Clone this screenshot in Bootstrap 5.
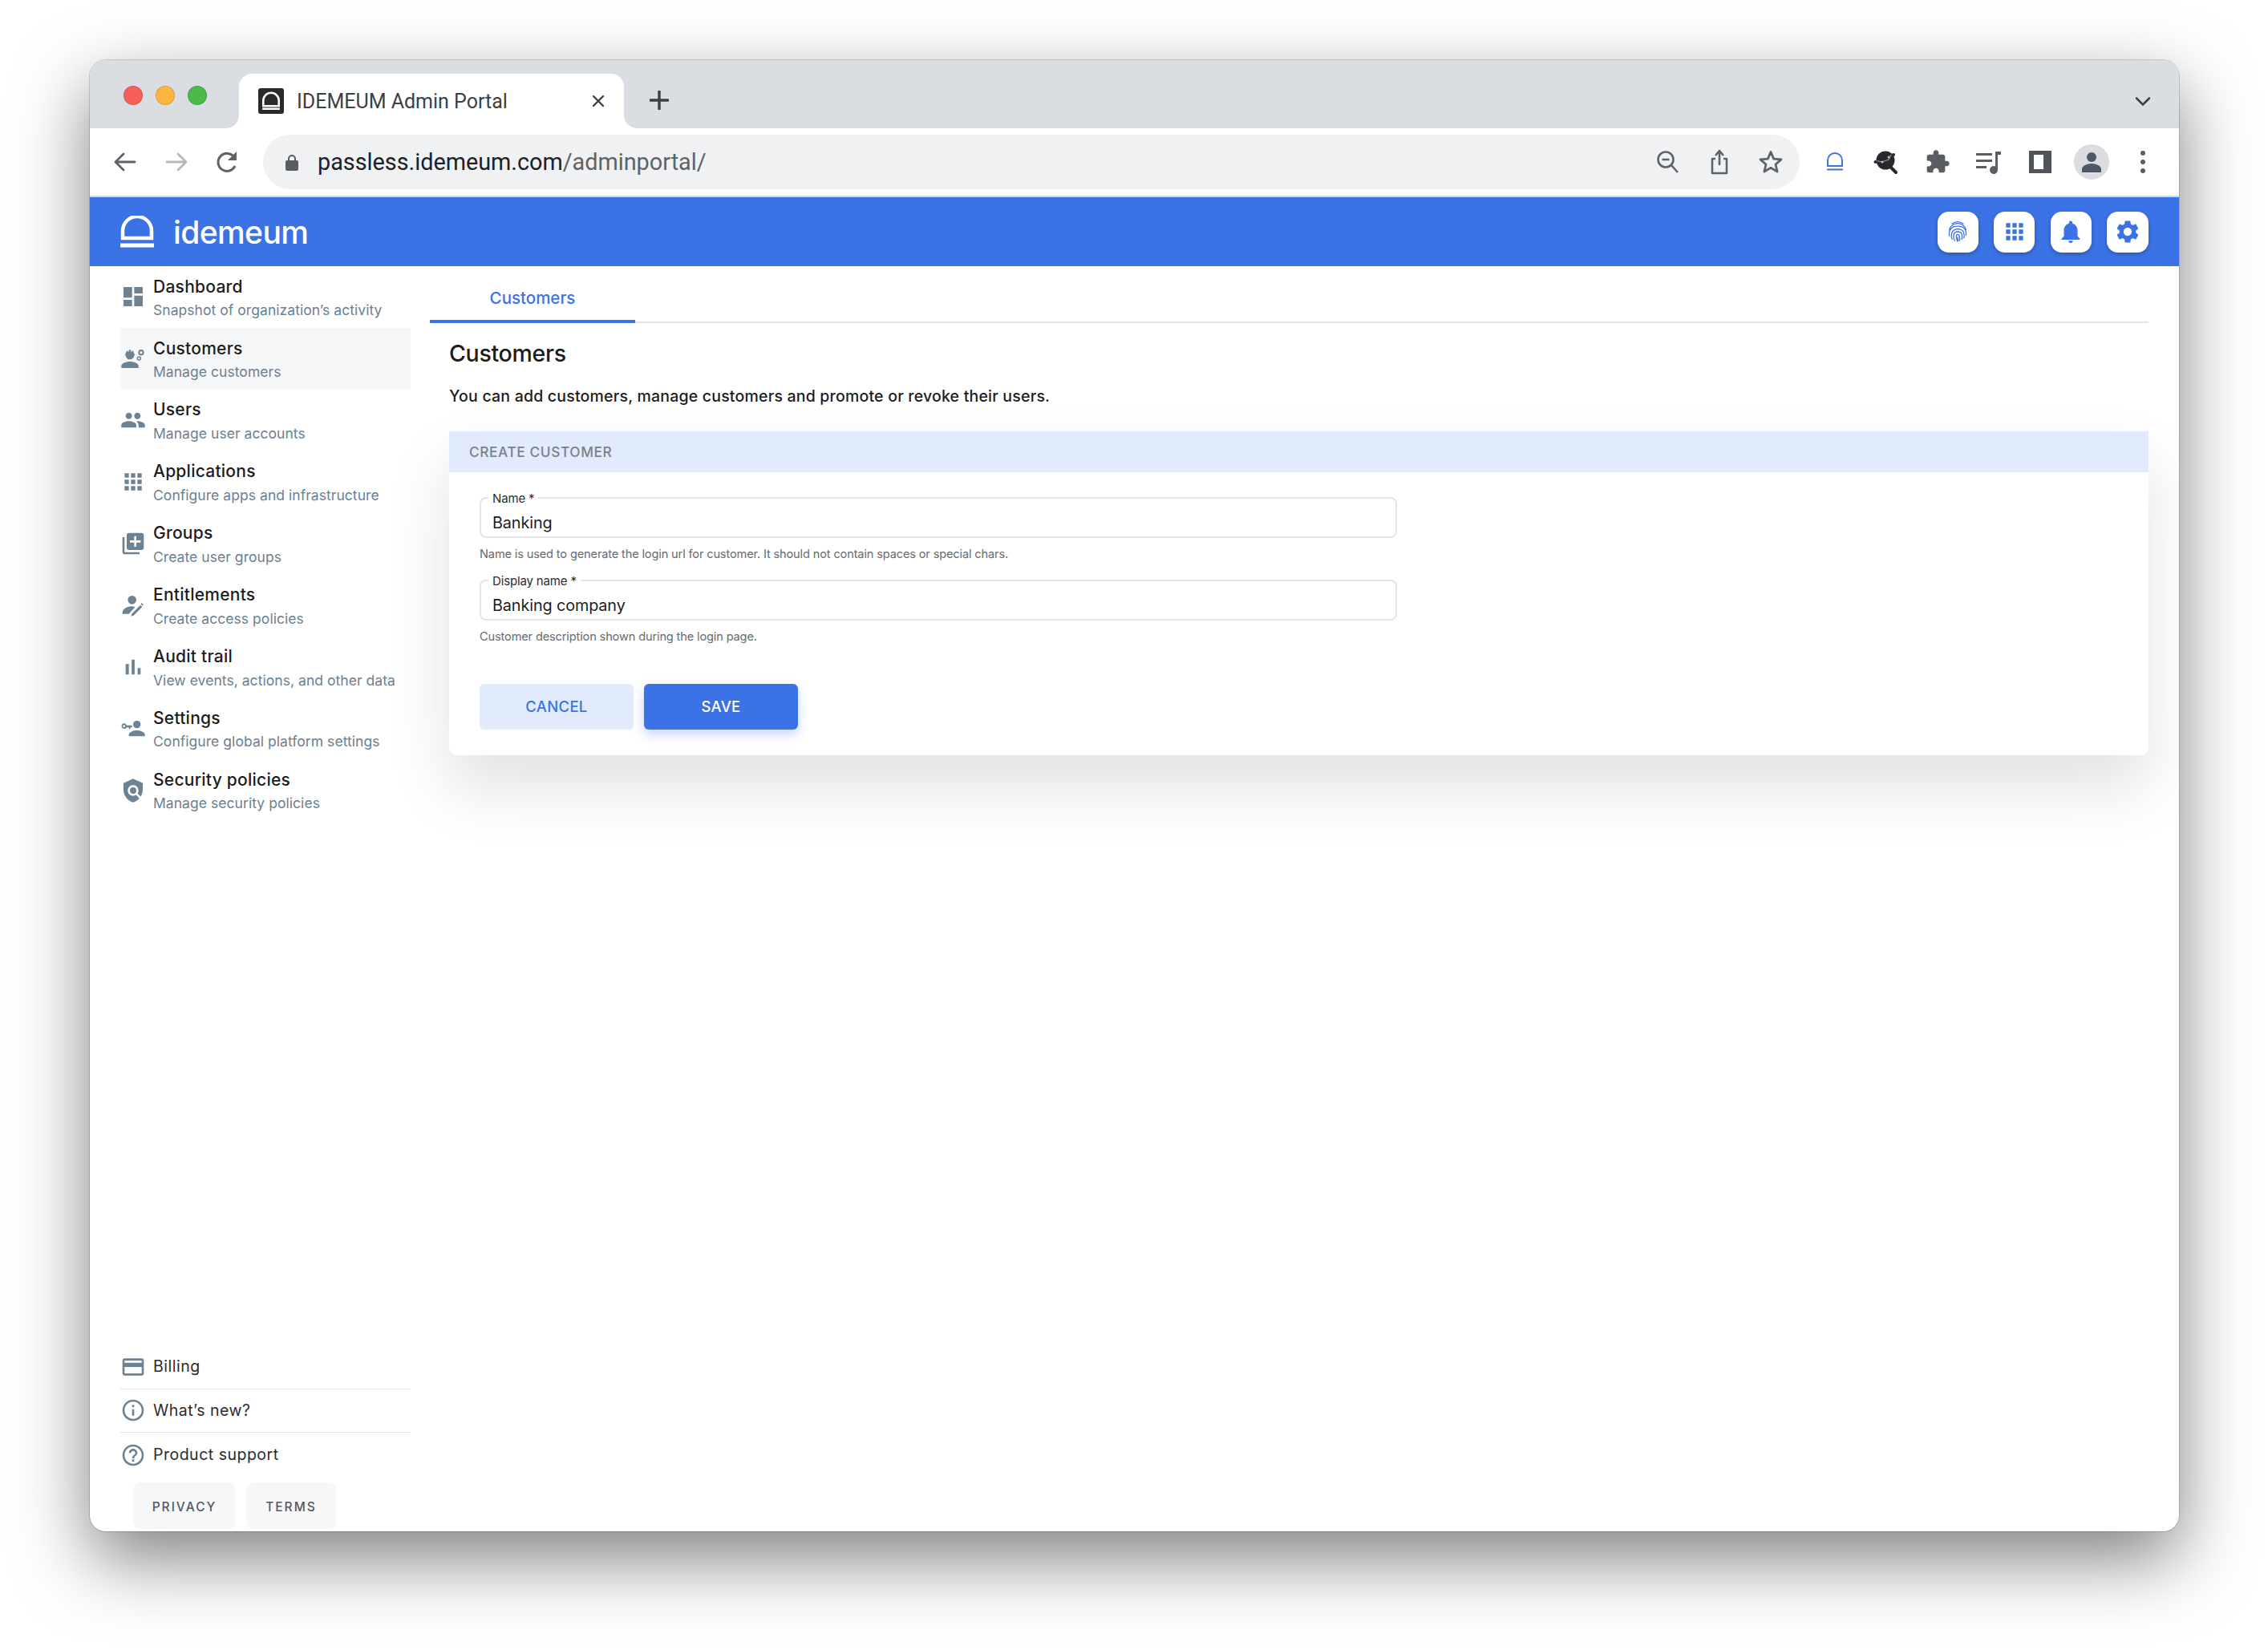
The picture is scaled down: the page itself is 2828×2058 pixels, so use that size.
<!DOCTYPE html>
<html lang="en">
<head>
<meta charset="utf-8">
<title>IDEMEUM Admin Portal</title>
<link href="https://cdn.jsdelivr.net/npm/bootstrap@5.3.0/dist/css/bootstrap.min.css" rel="stylesheet">
<style>
html,body{height:100%;background:#fff}
body{padding:75px 111px 148px 112px;font-family:"Inter","Liberation Sans",sans-serif;color:#1c1c1e;overflow:hidden}
.macwin{height:1835px;border-radius:20px;background:#fff;box-shadow:0 0 0 1px rgba(0,0,0,.16),0 34px 90px rgba(0,0,0,.5);overflow:hidden;display:flex;flex-direction:column}
.tabstrip{height:85px;background:#dadde2;flex:none;padding-left:42px;align-items:flex-start}
.tl{width:24px;height:24px;border-radius:50%;border:1px solid rgba(0,0,0,.12)}
.tl-r{background:#f5605a}.tl-y{background:#fbb540}.tl-g{background:#4bba4a}
.lights{gap:16px;padding-top:32px;width:144px}
.ctab{position:relative;width:480px;height:68px;margin-top:17px;background:#fff;border-radius:16px 16px 0 0;padding:0 24px;font:400 25px "Roboto",sans-serif;color:#3c4043}
.ctab::before,.ctab::after{content:"";position:absolute;bottom:0;width:16px;height:16px}
.ctab::before{left:-16px;background:radial-gradient(circle at 0 0,#dadde2 15.5px,#fff 16px)}
.ctab::after{right:-16px;background:radial-gradient(circle at 100% 0,#dadde2 15.5px,#fff 16px)}
.favi{width:32px;height:32px;background:#2a2a2c;border-radius:3px;margin-right:16px}
.ctab-x{margin-left:auto;margin-right:0}
.newtab{margin:38px 0 0 32px}
.chev{margin:46px 36px 0 auto}
.toolbar{height:86px;flex:none;background:#fff;border-bottom:2px solid #d3d6da;padding-left:28px}
.tbbtn{width:32px;height:32px;margin-right:32px;flex:none}
.omni{width:1916px;height:68px;background:#eff1f3;border-radius:34px;margin-left:-4px;padding:0 20px 0 28px;flex:none}
.urltext{font:400 28.8px "Roboto",sans-serif;color:#202124;margin-left:24px;white-space:nowrap}
.urltext span{color:#5f6368}
.omni-end{margin-left:auto;gap:32px}
.exts{gap:32px;margin-left:28px}
.avatar{width:44px;height:44px;border-radius:50%;background:#dadce0;margin:0 6px 0 -6px}
.appbar{height:86px;flex:none;background:#3b72e6;padding:0 38px}
.brand{font:500 39px "Inter",sans-serif;letter-spacing:-.6px;color:#fff;margin-left:24px}
.hbtns{gap:19.5px}
.hbtn{width:51px;height:51px;border-radius:14px;background:#fff;box-shadow:0 2px 5px rgba(0,0,0,.25);padding:0;border:0}
.hbtn:last-child{width:52px}
.hbtn:hover{background:#fff}
.shell{flex:1;min-height:0}
.side{width:400px;flex:none;padding-left:38px;display:flex;flex-direction:column}
.sideitem{height:76.9px;background:transparent;border:0;padding:3px 0 0 0;display:flex;align-items:center;border-radius:0;color:inherit}
.sideitem.cur{background:#f6f7f9}
.sideico{width:32px;height:32px;flex:none;margin-right:9px;fill:#6d8394}
.sideitem .sideico{margin-top:-3px}
.sidetitle{display:block;font-size:21px;font-weight:500;line-height:26px;color:#1c1c1e;letter-spacing:.25px}
.sidesub{display:block;font-size:17.5px;line-height:24px;margin-top:4.500px;color:#6b8091;letter-spacing:.05px}
.sidefoot{margin-top:auto}
.footrow{height:54.7px;display:flex;align-items:center;padding-left:0;border-bottom:2px solid #e3e4e6;font-size:19.5px;letter-spacing:.5px;color:#2c2c2e;background:transparent;border-radius:0;border-top:0;border-left:0;border-right:0}
.footbtns{gap:13px;padding:7px 0 3px 16px}
.footbtn{height:58px;background:#f6f7f9;border:0;border-radius:9px;font-size:15.5px;font-weight:500;letter-spacing:2px;color:#55595e;padding:3px 0 0;display:flex;align-items:center;justify-content:center}
.fb1{width:128px}.fb2{width:112px}
.mainpane{flex:1;min-width:0;padding:0 38px 0 24px}
.tabbar{height:71px;border-bottom:2px solid #e3e4e6}
.tabon{width:256px;height:71px;border-bottom:4px solid #3b72e6;margin-bottom:-2px;display:flex;align-items:center;justify-content:center;font-size:20.5px;font-weight:500;color:#3b72e6;background:transparent;text-decoration:none;padding-top:14px}
.pagebody{padding:0 0 0 24px}
.pagetitle{font-size:28.5px;font-weight:500;line-height:36px;margin:20px 0 0;color:#1c1c1e;letter-spacing:-.3px}
.pagelead{font-size:19.5px;font-weight:500;line-height:26px;margin:22px 0 0;color:#1c1c1e;letter-spacing:.2px}
.formcard{margin-top:31px;border:0;border-radius:0 0 10px 10px;box-shadow:0 40px 80px rgba(0,0,0,.12);height:404px}
.formhead{height:51px;background:#e2ebfc;border:0;border-radius:0!important;padding:0 25px;display:flex;align-items:center;font-size:17.3px;font-weight:500;letter-spacing:.6px;color:#7a8288}
.formbody{padding:31px 38px 0}
.fieldwrap{position:relative;width:1144px}
.fieldlabel{position:absolute;left:11px;top:-8.500px;background:#fff;padding:0 5px;font-size:15px;line-height:20px;color:#2c2c2e;margin:0;letter-spacing:-.15px}
.fieldinput{height:51px;border:2px solid #e3e4e6;border-radius:8px;padding:12px 14px 0;font-size:19.8px;letter-spacing:-.1px;color:#1c1c1e;box-shadow:none}
.fieldhelp{font-size:14.6px;line-height:20px;color:#666b70;margin:10px 0 22px;letter-spacing:-.15px}
.actions{gap:13px;margin-top:49px}
.actbtn{width:192px;height:57px;border-radius:6px;border:0;font-size:18.5px;font-weight:500;padding:0;letter-spacing:.3px}
.actcancel{background:#e2ebfc;color:#3b72e6}
.actsave{background:#3b72e6;color:#fff;box-shadow:0 6px 14px rgba(59,114,230,.3)}
.actcancel:hover{background:#e2ebfc;color:#3b72e6}
.actsave:hover{background:#3b72e6;color:#fff}
</style>
</head>
<body>
<div class="macwin">
  <div class="tabstrip d-flex">
    <div class="lights d-flex"><span class="tl tl-r"></span><span class="tl tl-y"></span><span class="tl tl-g"></span></div>
    <div class="ctab d-flex align-items-center">
      <span class="favi d-flex align-items-center justify-content-center"><svg width="24" height="24" viewBox="0 0 42 40"><path d="M4 31V19a17 17 0 0 1 34 0v12z" fill="none" stroke="#fff" stroke-width="4.5"/><path d="M2 37h38" stroke="#fff" stroke-width="4.5"/></svg></span>
      <span>IDEMEUM Admin Portal</span>
      <svg class="ctab-x" width="16" height="16" viewBox="0 0 16 16"><path d="M2 2l12 12M14 2L2 14" stroke="#3c4043" stroke-width="2.4" stroke-linecap="round"/></svg>
    </div>
    <svg class="newtab" width="24" height="24" viewBox="0 0 24 24"><path d="M12 1v22M1 12h22" stroke="#3c4043" stroke-width="3.4" stroke-linecap="round"/></svg>
    <svg class="chev" width="18" height="12" viewBox="0 0 18 12"><path d="M1 1.500l8 8 8-8" fill="none" stroke="#3c4043" stroke-width="2.600" stroke-linecap="round"/></svg>
  </div>
  <div class="toolbar d-flex align-items-center">
    <svg class="tbbtn" viewBox="0 0 32 32"><path d="M28 16H5M14 6L4 16l10 10" fill="none" stroke="#5f6368" stroke-width="2.800" stroke-linecap="round" stroke-linejoin="round"/></svg>
    <svg class="tbbtn" viewBox="0 0 32 32"><path d="M4 16h23M18 6l10 10-10 10" fill="none" stroke="#b4b7bb" stroke-width="2.800" stroke-linecap="round" stroke-linejoin="round"/></svg>
    <svg class="tbbtn" viewBox="0 0 32 32"><path d="M25 21a11 11 0 1 1-1-11" fill="none" stroke="#5f6368" stroke-width="3"/><path d="M27 3v11H16z" fill="#5f6368"/></svg>
    <div class="omni d-flex align-items-center">
      <svg width="16" height="21" viewBox="0 0 16 21"><path d="M4 9V6a4 4 0 0 1 8 0v3" fill="none" stroke="#5a5d63" stroke-width="2"/><rect x="0" y="8" width="16" height="13" rx="2" fill="#5a5d63"/></svg>
      <span class="urltext">passless.idemeum.com<span>/adminportal/</span></span>
      <div class="omni-end d-flex align-items-center">
        <svg width="32" height="32" viewBox="0 0 32 32"><circle cx="13" cy="13" r="9.500" fill="none" stroke="#5f6368" stroke-width="2.600"/><path d="M8.500 13h9M20 20l8 9" stroke="#5f6368" stroke-width="2.600"/></svg>
        <svg width="32" height="32" viewBox="0 0 32 32"><path d="M11 12H7v18h18V12h-4M16 20V3M11 8l5-6 5 6" fill="none" stroke="#5f6368" stroke-width="2.600" stroke-linejoin="round"/></svg>
        <svg width="32" height="32" viewBox="0 0 32 32"><path d="M16 3.500l3.700 8.600 9.300.8-7 6.100 2.100 9.100-8.100-4.800-8.100 4.800 2.100-9.100-7-6.100 9.300-.8z" fill="none" stroke="#5f6368" stroke-width="2.800" stroke-linejoin="round"/></svg>
      </div>
    </div>
    <div class="exts d-flex align-items-center">
      <svg width="32" height="32" viewBox="0 0 32 32"><path d="M7 21v-7a9 9 0 0 1 18 0v7z" fill="none" stroke="#3b72e6" stroke-width="2"/><path d="M6 25.500h20" stroke="#3b72e6" stroke-width="2.200"/></svg>
      <svg width="32" height="32" viewBox="0 0 32 32"><circle cx="15" cy="14" r="11.500" fill="#26282b"/><path d="M21 22l7 7" stroke="#26282b" stroke-width="4" stroke-linecap="round"/><path d="M3 15h3l5 1 8-3 3-6" fill="none" stroke="#9a9da1" stroke-width="1.200"/><circle cx="2.500" cy="16" r="2" fill="#26282b"/><circle cx="25" cy="7" r="2" fill="#26282b"/><circle cx="11" cy="16" r="1.500" fill="#bbb"/><circle cx="19" cy="10" r="1.500" fill="#bbb"/></svg>
      <svg width="32" height="32" viewBox="0 0 24 24"><path fill="#5a5d63" d="M20.500 11H19V7c0-1.100-.9-2-2-2h-4V3.500C13 2.120 11.880 1 10.500 1S8 2.120 8 3.500V5H4c-1.100 0-1.990.9-1.990 2v3.800H3.500c1.490 0 2.700 1.210 2.700 2.700s-1.210 2.700-2.700 2.700H2V20c0 1.100.9 2 2 2h3.800v-1.500c0-1.490 1.210-2.700 2.700-2.700 1.490 0 2.700 1.210 2.700 2.700V22H17c1.100 0 2-.9 2-2v-4h1.500c1.380 0 2.500-1.120 2.500-2.500S21.880 11 20.500 11z"/></svg>
      <svg width="32" height="32" viewBox="0 0 32 32"><path d="M0 5h20v3H0zM0 13h20v3H0zM0 21h13v3H0zM24 3h7v4h-4v19a5 5 0 1 1-3-4.500z" fill="#5a5d63"/></svg>
      <svg width="32" height="32" viewBox="0 0 32 32"><path fill="#50555b" fill-rule="evenodd" d="M2 2h28v28H2zM8 7v18h12V7z"/></svg>
      <span class="avatar d-flex align-items-center justify-content-center"><svg width="28" height="28" viewBox="0 0 28 28"><circle cx="14" cy="8" r="6" fill="#4f586b"/><path d="M2 27v-4c0-4 6-7 12-7s12 3 12 7v4z" fill="#4f586b"/></svg></span>
      <svg width="8" height="32" viewBox="0 0 8 32"><circle cx="4" cy="5" r="3" fill="#5a5d63"/><circle cx="4" cy="16" r="3" fill="#5a5d63"/><circle cx="4" cy="27" r="3" fill="#5a5d63"/></svg>
    </div>
  </div>
  <nav class="navbar appbar d-flex align-items-center justify-content-between">
    <div class="d-flex align-items-center">
      <svg width="42" height="40" viewBox="0 0 42 40"><path d="M3 28V19a18 18 0 0 1 36 0v9z" fill="none" stroke="#fff" stroke-width="4.500"/><path d="M0 37h42" stroke="#fff" stroke-width="5"/></svg>
      <span class="brand">idemeum</span>
    </div>
    <div class="hbtns d-flex">
      <button class="btn hbtn" type="button" aria-label="Passkey"><svg width="26" height="30" viewBox="0 0 30 32" fill="none" stroke="#3b72e6" stroke-width="1.500" stroke-linecap="round"><path d="M7 4.500a13 13 0 0 1 16 0M3 13a12.500 12.500 0 0 1 24 0M3 22c-1-9 3-14 12-14s13 5 12 13M7 27c-2-5-2-14 8-15 9 0 10 7 9 13M11 29c-3-5-3-13 4-13s7 6 6 11M15 30c-2-3-3-10 0-10s3 4 3 9M15 24c0 2 0 3 1 5"/></svg></button>
      <button class="btn hbtn" type="button" aria-label="Apps"><svg width="32" height="32" viewBox="0 0 24 24"><path fill="#3b72e6" d="M4 8h4V4H4v4zm6 12h4v-4h-4v4zm-6 0h4v-4H4v4zm0-6h4v-4H4v4zm6 0h4v-4h-4v4zm6-10v4h4V4h-4zm-6 4h4V4h-4v4zm6 6h4v-4h-4v4zm0 6h4v-4h-4v4z"/></svg></button>
      <button class="btn hbtn" type="button" aria-label="Notifications"><svg width="34" height="34" viewBox="0 0 24 24"><path fill="#3b72e6" d="M12 22c1.100 0 2-.9 2-2h-4c0 1.100.89 2 2 2zm6-6v-5c0-3.070-1.640-5.640-4.500-6.320V4c0-.83-.67-1.500-1.500-1.500s-1.500.67-1.500 1.500v.68C7.630 5.360 6 7.920 6 11v5l-2 2v1h16v-1l-2-2z"/></svg></button>
      <button class="btn hbtn" type="button" aria-label="Settings"><svg width="34" height="34" viewBox="0 0 24 24"><path fill="#3b72e6" d="M19.140 12.940c.04-.3.06-.61.06-.94 0-.32-.02-.64-.07-.94l2.030-1.580c.18-.14.23-.41.12-.61l-1.920-3.320c-.12-.22-.37-.29-.59-.22l-2.390.96c-.5-.38-1.030-.7-1.620-.94l-.36-2.540c-.04-.24-.24-.41-.48-.41h-3.840c-.24 0-.43.17-.47.41l-.36 2.540c-.59.24-1.130.57-1.620.94l-2.390-.96c-.22-.08-.47 0-.59.22L2.740 8.870c-.12.21-.08.47.12.61l2.030 1.580c-.05.3-.09.63-.09.94s.02.64.07.94l-2.030 1.580c-.18.14-.23.41-.12.61l1.920 3.320c.12.22.37.29.59.22l2.390-.96c.5.38 1.030.7 1.620.94l.36 2.540c.05.24.24.41.48.41h3.840c.24 0 .44-.17.47-.41l.36-2.540c.59-.24 1.130-.56 1.620-.94l2.390.96c.22.08.47 0 .59-.22l1.920-3.320c.12-.22.07-.47-.12-.61l-2.010-1.580zM12 15.600c-1.980 0-3.600-1.620-3.600-3.600s1.620-3.600 3.600-3.600 3.600 1.620 3.600 3.600-1.620 3.600-3.600 3.600z"/></svg></button>
    </div>
  </nav>
  <div class="shell d-flex">
    <aside class="side">
      <div class="list-group list-group-flush">
        <a class="list-group-item sideitem"><svg class="sideico" viewBox="0 0 24 24"><path d="M3 13h8V3H3v10zm0 8h8v-6H3v6zm10 0h8V11h-8v10zm0-18v6h8V3h-8z"/></svg><span><span class="sidetitle">Dashboard</span><span class="sidesub">Snapshot of organization’s activity</span></span></a>
        <a class="list-group-item sideitem cur"><svg class="sideico" viewBox="0 0 24 24"><path d="M9 15c-2.670 0-8 1.340-8 4v2h16v-2c0-2.660-5.330-4-8-4z"/><path d="M4.740 9H5c0 2.210 1.790 4 4 4s4-1.790 4-4h.26c.27 0 .49-.22.49-.49v-.02c0-.27-.22-.49-.49-.49H13c0-1.480-.81-2.750-2-3.450v.95c0 .28-.22.5-.5.5s-.5-.22-.5-.5V4.140C9.680 4.060 9.350 4 9 4s-.68.06-1 .14V5.500c0 .28-.22.5-.5.5S7 5.780 7 5.500v-.95C5.810 5.250 5 6.520 5 8h-.26c-.27 0-.49.22-.49.49v.03c0 .26.22.48.49.48z"/><circle cx="19.500" cy="6.500" r="2" fill="none" stroke="#6d8394" stroke-width="1.500"/><circle cx="17.500" cy="12" r="1.500" fill="none" stroke="#6d8394" stroke-width="1.200"/></svg><span><span class="sidetitle">Customers</span><span class="sidesub">Manage customers</span></span></a>
        <a class="list-group-item sideitem"><svg class="sideico" viewBox="0 0 24 24"><path d="M16 11c1.660 0 2.990-1.340 2.990-3S17.660 5 16 5c-1.660 0-3 1.340-3 3s1.340 3 3 3zm-8 0c1.660 0 2.990-1.340 2.990-3S9.660 5 8 5C6.340 5 5 6.340 5 8s1.340 3 3 3zm0 2c-2.330 0-7 1.170-7 3.500V19h14v-2.500c0-2.330-4.670-3.500-7-3.500zm8 0c-.29 0-.62.02-.97.05 1.160.84 1.970 1.970 1.970 3.450V19h6v-2.500c0-2.330-4.670-3.500-7-3.500z"/></svg><span><span class="sidetitle">Users</span><span class="sidesub">Manage user accounts</span></span></a>
        <a class="list-group-item sideitem"><svg class="sideico" viewBox="0 0 24 24"><path d="M4 8h4V4H4v4zm6 12h4v-4h-4v4zm-6 0h4v-4H4v4zm0-6h4v-4H4v4zm6 0h4v-4h-4v4zm6-10v4h4V4h-4zm-6 4h4V4h-4v4zm6 6h4v-4h-4v4zm0 6h4v-4h-4v4z"/></svg><span><span class="sidetitle">Applications</span><span class="sidesub">Configure apps and infrastructure</span></span></a>
        <a class="list-group-item sideitem"><svg class="sideico" viewBox="0 0 24 24"><path d="M4 6H2v14c0 1.100.9 2 2 2h14v-2H4V6zm16-4H8c-1.100 0-2 .9-2 2v12c0 1.100.9 2 2 2h12c1.100 0 2-.9 2-2V4c0-1.100-.9-2-2-2zm-1 9h-4v4h-2v-4H9V9h4V5h2v4h4v2z"/></svg><span><span class="sidetitle">Groups</span><span class="sidesub">Create user groups</span></span></a>
        <a class="list-group-item sideitem"><svg class="sideico" viewBox="0 0 24 24"><circle cx="11" cy="7" r="4"/><path d="M2 20v-1c0-3 3.500-6 8-6 1.500 0 2.800.3 3.800.7L8 20z"/><path d="M12.500 21.500l-2.500.8.800-2.500 8-8 1.700 1.700zM20.800 12.300l.9-.9-1.700-1.700-.9.9z"/></svg><span><span class="sidetitle">Entitlements</span><span class="sidesub">Create access policies</span></span></a>
        <a class="list-group-item sideitem"><svg class="sideico" viewBox="0 0 24 24"><path d="M5 9.200h3V19H5zM10.600 5h2.800v14h-2.800zm5.600 8H19v6h-2.800z"/></svg><span><span class="sidetitle">Audit trail</span><span class="sidesub">View events, actions, and other data</span></span></a>
        <a class="list-group-item sideitem"><svg class="sideico" viewBox="0 0 24 24"><circle cx="15.500" cy="8" r="3.500"/><path d="M8 19v-1.500c0-2.500 4.500-4 7.500-4s7.500 1.500 7.500 4V19z"/><path fill-rule="evenodd" d="M3.500 7a2.500 2.500 0 0 1 2.400 1.800H11v1.800H9.500v1.500H8v-1.500H5.900A2.500 2.500 0 1 1 3.500 7zm0 1.500a1 1 0 1 0 0 2 1 1 0 0 0 0-2z"/></svg><span><span class="sidetitle">Settings</span><span class="sidesub">Configure global platform settings</span></span></a>
        <a class="list-group-item sideitem"><svg class="sideico" viewBox="0 0 24 24"><path d="M12 1L3 5v6c0 5.550 3.840 10.740 9 12 2.300-.56 4.330-1.900 5.880-3.710l-3.120-3.120c-1.940 1.290-4.580 1.070-6.290-.64-1.950-1.950-1.950-5.120 0-7.070 1.950-1.950 5.120-1.950 7.070 0 1.710 1.710 1.920 4.350.64 6.290l2.900 2.900C20.290 15.690 21 13.380 21 11V5l-9-4z"/><circle cx="12" cy="12" r="3"/></svg><span><span class="sidetitle">Security policies</span><span class="sidesub">Manage security policies</span></span></a>
      </div>
      <div class="sidefoot">
        <div class="list-group list-group-flush">
          <a class="list-group-item footrow"><svg class="sideico" viewBox="0 0 24 24"><path d="M20 4H4c-1.110 0-1.990.89-1.990 2L2 18c0 1.110.89 2 2 2h16c1.110 0 2-.89 2-2V6c0-1.110-.89-2-2-2zm0 14H4v-6h16v6zm0-10H4V6h16v2z"/></svg>Billing</a>
          <a class="list-group-item footrow"><svg class="sideico" viewBox="0 0 24 24"><path d="M11 7h2v2h-2zm0 4h2v6h-2zm1-9C6.480 2 2 6.480 2 12s4.480 10 10 10 10-4.480 10-10S17.520 2 12 2zm0 18c-4.410 0-8-3.590-8-8s3.590-8 8-8 8 3.590 8 8-3.590 8-8 8z"/></svg>What’s new?</a>
          <a class="list-group-item footrow"><svg class="sideico" viewBox="0 0 24 24"><path d="M11 18h2v-2h-2v2zm1-16C6.480 2 2 6.480 2 12s4.480 10 10 10 10-4.480 10-10S17.520 2 12 2zm0 18c-4.410 0-8-3.590-8-8s3.590-8 8-8 8 3.590 8 8-3.590 8-8 8zm0-14c-2.210 0-4 1.790-4 4h2c0-1.100.9-2 2-2s2 .9 2 2c0 2-3 1.750-3 5h2c0-2.250 3-2.500 3-5 0-2.210-1.790-4-4-4z"/></svg>Product support</a>
        </div>
        <div class="footbtns d-flex">
          <button class="btn footbtn fb1" type="button">PRIVACY</button>
          <button class="btn footbtn fb2" type="button">TERMS</button>
        </div>
      </div>
    </aside>
    <main class="mainpane">
      <div class="tabbar d-flex"><a class="tabon">Customers</a></div>
      <div class="pagebody">
        <h1 class="pagetitle">Customers</h1>
        <p class="pagelead">You can add customers, manage customers and promote or revoke their users.</p>
        <div class="card formcard">
          <div class="card-header formhead">CREATE CUSTOMER</div>
          <div class="card-body formbody">
            <div class="fieldwrap">
              <label class="fieldlabel" for="f1">Name *</label>
              <input id="f1" class="form-control fieldinput" type="text" value="Banking">
            </div>
            <p class="fieldhelp">Name is used to generate the login url for customer. It should not contain spaces or special chars.</p>
            <div class="fieldwrap">
              <label class="fieldlabel" for="f2">Display name *</label>
              <input id="f2" class="form-control fieldinput" type="text" value="Banking company">
            </div>
            <p class="fieldhelp">Customer description shown during the login page.</p>
            <div class="actions d-flex">
              <button class="btn actbtn actcancel" type="button">CANCEL</button>
              <button class="btn actbtn actsave" type="button">SAVE</button>
            </div>
          </div>
        </div>
      </div>
    </main>
  </div>
</div>
<script src="https://cdn.jsdelivr.net/npm/bootstrap@5.3.0/dist/js/bootstrap.bundle.min.js"></script>
</body>
</html>
